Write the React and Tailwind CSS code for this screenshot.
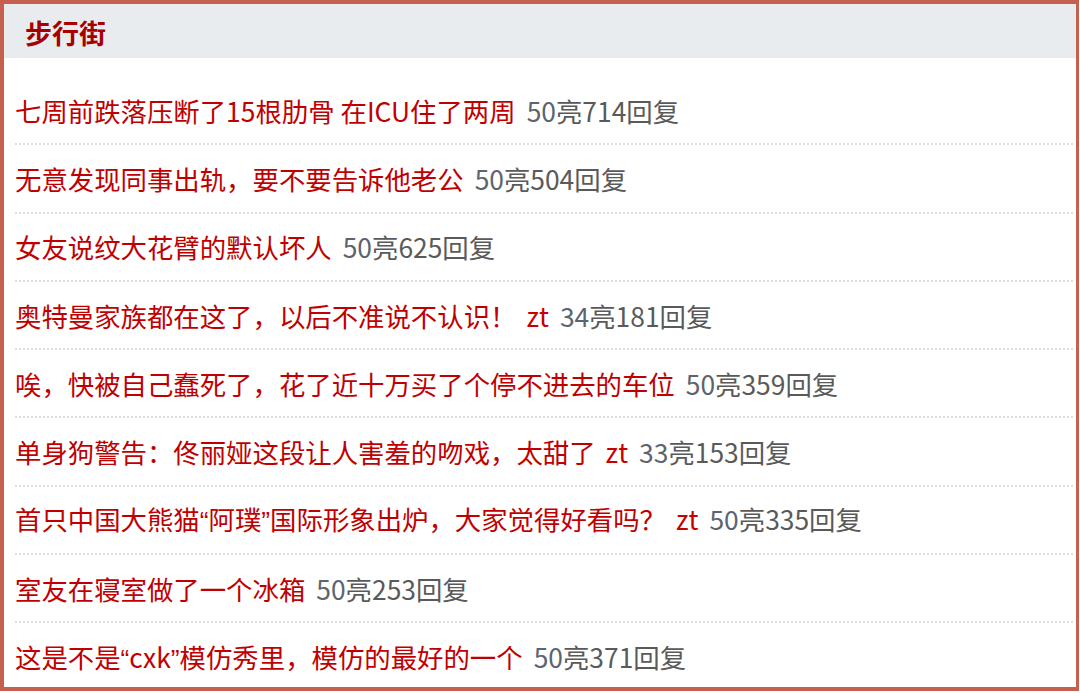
import React from "react";

const rows = [
  { t: "七周前跌落压断了15根肋骨 在ICU住了两周", zt: false, l: "50", r: "714" },
  { t: "无意发现同事出轨，要不要告诉他老公", zt: false, l: "50", r: "504" },
  { t: "女友说纹大花臂的默认坏人", zt: false, l: "50", r: "625" },
  { t: "奥特曼家族都在这了，以后不准说不认识！", zt: true, l: "34", r: "181" },
  { t: "唉，快被自己蠢死了，花了近十万买了个停不进去的车位", zt: false, l: "50", r: "359" },
  { t: "单身狗警告：佟丽娅这段让人害羞的吻戏，太甜了", zt: true, l: "33", r: "153" },
  { t: "首只中国大熊猫“阿璞”国际形象出炉，大家觉得好看吗？", zt: true, l: "50", r: "335" },
  { t: "室友在寝室做了一个冰箱", zt: false, l: "50", r: "253" },
  { t: "这是不是“cxk”模仿秀里，模仿的最好的一个", zt: false, l: "50", r: "371" },
];

function renderText(s) {
  const parts = s.split(/([“”])/);
  return parts.map((p, i) =>
    p === "“" || p === "”" ? (
      <span key={i} style={{ fontFamily: '"Liberation Sans", sans-serif' }}>
        {p}
      </span>
    ) : (
      <React.Fragment key={i}>{p}</React.Fragment>
    )
  );
}

export default function App() {
  return (
    <div
      className="w-[1080px] h-[693px] bg-white overflow-hidden"
      style={{ fontFamily: '"Microsoft YaHei", "Noto Sans CJK SC", "Noto Sans", sans-serif' }}
    >
      <div className="w-[1079px] h-[691px] border-[4px] border-r-[3px] border-[#c6604e] flex flex-col">
        <div className="h-[54px] shrink-0 bg-[#e8ecef] flex items-center pl-[21px] pt-[3px]">
          <span className="text-[27px] font-bold text-[#a80000] leading-none">步行街</span>
        </div>
        <div className="flex-1 min-h-0 overflow-hidden pt-[19px] pl-[11px] pr-[3px]">
          {rows.map((row, i) => (
            <div
              key={i}
              className={
                "h-[68.25px] flex items-center pt-[2px] " +
                (i < rows.length - 1 ? "border-b-2 border-dotted border-[#dedede]" : "")
              }
            >
              <span className="text-[26.4px] leading-none text-[#c00000] whitespace-nowrap">
                {renderText(row.t)}
                {row.zt ? <span className="ml-[10px] text-[#c80000]">zt</span> : null}
                <span className="ml-[11px] text-[#5a5a5a]">
                  <span className="text-[#5c6470]">{row.l}</span>亮{row.r}回复
                </span>
              </span>
            </div>
          ))}
        </div>
      </div>
    </div>
  );
}
